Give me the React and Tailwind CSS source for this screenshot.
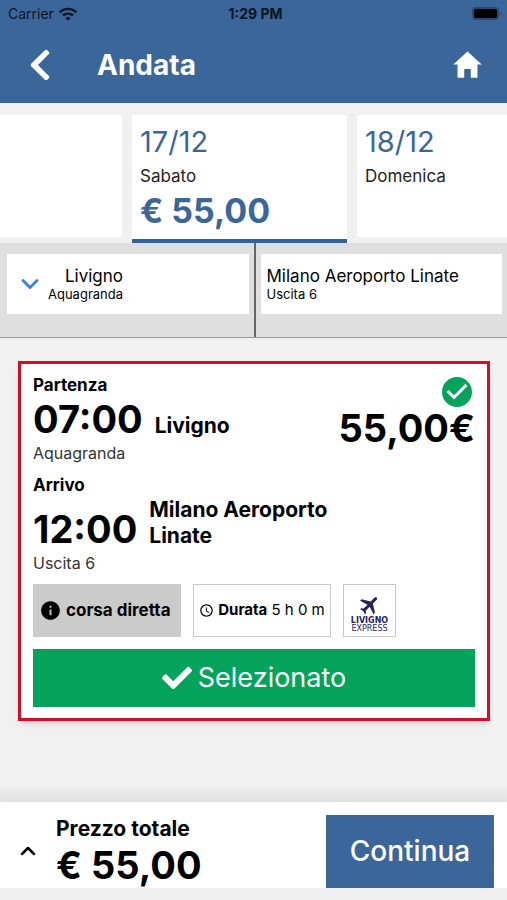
import React from 'react'
import { FaCheck, FaChevronLeft } from 'react-icons/fa'
import { IoMdHome, IoMdInformationCircle } from 'react-icons/io'
import { MdAccessTime, MdCheckCircle, MdFlight, MdWifi } from 'react-icons/md'
import { ChevronDown, ChevronUp } from 'lucide-react'

const DAYS = [
  { date: '17/12', day: 'Sabato', price: '€ 55,00', active: true },
  { date: '18/12', day: 'Domenica' }
]

function StatusBar() {
  return (
    <div className="grid grid-cols-3 items-center h-7 pl-2 pr-1 text-sm text-[#0a1522]">
      <div className="flex items-center gap-1">
        <span>Carrier</span>
        <MdWifi className="w-5 h-5" />
      </div>
      <div className="text-center font-bold">1:29 PM</div>
      <div className="flex items-center justify-end">
        <svg className="w-8 h-4" viewBox="0 0 32 16">
          <rect x="1" y="1" width="27" height="13" rx="4" fill="#2a4b70" />
          <rect x="3" y="3" width="23" height="9" rx="2" fill="#000" />
          <path d="M29.5 5.5v4c1.6-.6 1.6-3.4 0-4z" fill="#2a4b70" />
        </svg>
      </div>
    </div>
  )
}

function DayTab({ date, day, price, active }) {
  return (
    <button
      className={
        active
          ? 'w-[215px] shrink-0 h-32 bg-white border-b-4 border-[#34629c] px-2 pt-[7px] flex flex-col items-start text-left'
          : 'w-[215px] shrink-0 h-[122px] bg-white px-2 pt-[7px] flex flex-col items-start text-left'
      }
    >
      <span className="text-[29px] leading-10 text-[#3b6699]">{date}</span>
      <span className="text-[17px] leading-7 text-[#222]">{day}</span>
      {price && <span className="text-[34px] leading-[42px] font-bold text-[#3b6699]">{price}</span>}
    </button>
  )
}

function Leg({ label, time, place, stop }) {
  return (
    <div>
      <h3 className="text-[17px] leading-6 font-bold">{label}</h3>
      <div className="flex items-end gap-3">
        <span className="text-[38px] leading-[44px] font-bold shrink-0">{time}</span>
        <span className="text-[21px] leading-[26px] font-bold max-w-[190px] pb-[2px]">{place}</span>
      </div>
      <p className="text-base text-[#333]">{stop}</p>
    </div>
  )
}

export default function App() {
  return (
    <div className="min-h-screen flex flex-col bg-[#f1f1f1] text-black overflow-x-hidden font-['Inter','Liberation_Sans',sans-serif]">
      <header className="bg-[#3b6699]">
        <StatusBar />
        <div className="flex items-center h-[75px] pb-[2px] px-[22px] text-white">
          <button aria-label="Indietro">
            <FaChevronLeft className="w-9 h-9" />
          </button>
          <h1 className="ml-[39px] text-[28px] font-bold flex-1">Andata</h1>
          <button aria-label="Home">
            <IoMdHome className="w-[35px] h-[35px]" />
          </button>
        </div>
      </header>

      <nav className="flex items-start h-[140px] pt-3 gap-[10px] overflow-hidden">
        <div className="w-[122px] shrink-0 h-[122px] bg-white" />
        {DAYS.map(item => (
          <DayTab key={item.date} {...item} />
        ))}
      </nav>

      {/* Stations */}
      <section className="grid grid-cols-2 bg-[#dfdfdf] border-b border-[#999]">
        <div className="pt-[11px] pb-[23px] pl-[7px] pr-[5px]">
          <button className="w-full h-[60px] bg-white flex items-center pl-[9px] gap-1">
            <ChevronDown className="w-7 h-7 text-[#3f82e6]" strokeWidth={2.5} />
            <span className="text-right">
              <span className="block text-[17px] leading-5">Livigno</span>
              <span className="block text-[13px] leading-4">Aquagranda</span>
            </span>
          </button>
        </div>
        <div className="pt-[11px] pb-[23px] pl-[5px] pr-[5px] border-l-2 border-[#666]">
          <div className="h-[60px] bg-white flex flex-col justify-center pl-[6px]">
            <span className="text-[17px] leading-5">Milano Aeroporto Linate</span>
            <span className="text-[13px] leading-4">Uscita 6</span>
          </div>
        </div>
      </section>

      {/* Selected trip */}
      <main className="flex-1 pt-[23px] pl-[18px] pr-[17px]">
        <article className="relative bg-white border-[3px] border-[#cc1025] px-3 pt-[9px] pb-[11px] shadow-md">
          <div className="absolute right-3 top-[10px] flex flex-col items-end">
            <MdCheckCircle className="w-9 h-9 text-[#04a35b]" />
            <span className="text-[38px] leading-9 font-bold">55,00€</span>
          </div>
          <div className="flex flex-col gap-2">
            <Leg label="Partenza" time="07:00" place="Livigno" stop="Aquagranda" />
            <Leg label="Arrivo" time="12:00" place="Milano Aeroporto Linate" stop="Uscita 6" />
          </div>
          <div className="flex gap-3 mt-[9px]">
            <div className="h-[53px] w-[148px] bg-[#cbcbcb] flex items-center pl-[6px] gap-1 text-[17px] font-bold whitespace-nowrap">
              <IoMdInformationCircle className="w-[23px] h-[23px] shrink-0" />
              corsa diretta
            </div>
            <div className="h-[53px] w-[138px] border border-[#c8c8c8] flex items-center justify-center gap-1 text-[15px] whitespace-nowrap">
              <MdAccessTime className="w-[15px] h-[15px] shrink-0" />
              <span>
                <b className="font-bold">Durata</b> 5 h 0 m
              </span>
            </div>
            <div className="h-[53px] w-[53px] border border-[#c8c8c8] flex flex-col items-center pt-2 text-[#26235c] font-['DejaVu_Sans',sans-serif]">
              <MdFlight className="w-6 h-6 rotate-45 shrink-0" />
              <span className="text-[8px] leading-[8px] font-bold">LIVIGNO</span>
              <span className="text-[8px] leading-[8px]">EXPRESS</span>
            </div>
          </div>
          <button className="w-full h-[58px] mt-3 bg-[#04a35b] text-white text-[27px] flex items-center justify-center gap-[6px]">
            <FaCheck className="w-[30px] h-[30px]" />
            Selezionato
          </button>
        </article>
      </main>

      <footer className="flex items-center h-[98px] pt-3 bg-white border-b-[12px] border-[#f0f0f0] pl-4 pr-[13px] shadow-[0_-6px_8px_4px_#e2e2e2]">
        <button aria-label="Dettagli prezzo">
          <ChevronUp className="w-6 h-6" strokeWidth={2.5} />
        </button>
        <div className="ml-4 flex-1 font-bold">
          <div className="text-[21px] leading-7">Prezzo totale</div>
          <div className="text-[38px] leading-[44px]">€ 55,00</div>
        </div>
        <button className="w-[168px] h-[73px] bg-[#3b6699] text-white text-[28px] font-medium">Continua</button>
      </footer>
    </div>
  )
}
